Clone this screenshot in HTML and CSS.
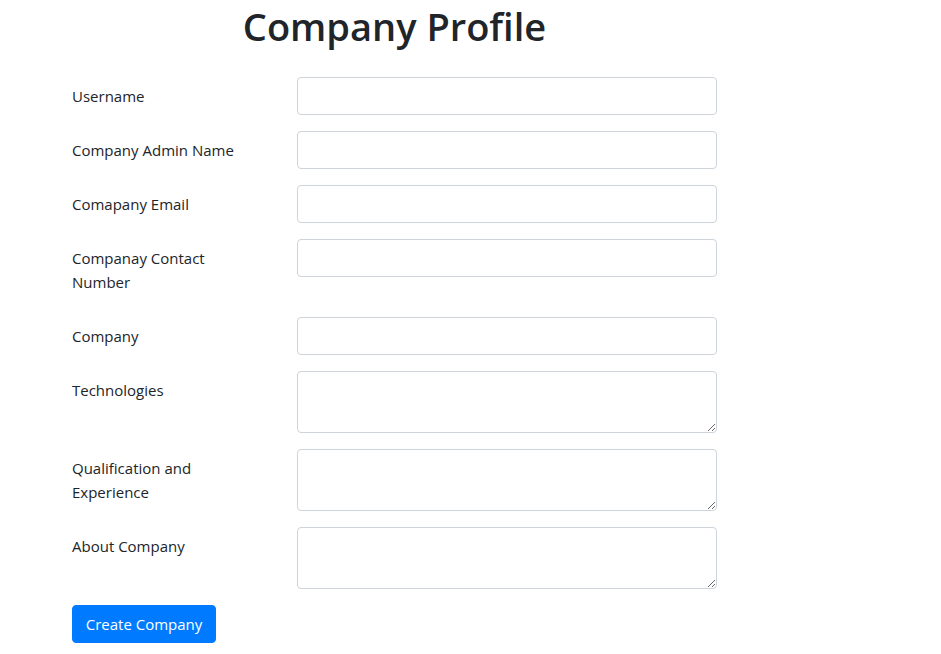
FILE: index.html
```html
<!DOCTYPE html>
<html>
<head>
<meta charset="utf-8">
<link rel="stylesheet" href="styles.css">
</head>
<body>
<div class="wrap">
  <h1 class="title">Company Profile</h1>
  <form class="form">
    <div class="row"><label class="lbl">Username</label><div class="field"><input class="ctl" type="text"></div></div>
    <div class="row"><label class="lbl">Company Admin Name</label><div class="field"><input class="ctl" type="text"></div></div>
    <div class="row"><label class="lbl">Comapany Email</label><div class="field"><input class="ctl" type="text"></div></div>
    <div class="row"><label class="lbl">Companay Contact Number</label><div class="field"><input class="ctl" type="text"></div></div>
    <div class="row"><label class="lbl">Company</label><div class="field"><input class="ctl" type="text"></div></div>
    <div class="row"><label class="lbl">Technologies</label><div class="field"><textarea class="ctl area" rows="2"></textarea></div></div>
    <div class="row"><label class="lbl">Qualification and Experience</label><div class="field"><textarea class="ctl area" rows="2"></textarea></div></div>
    <div class="row"><label class="lbl">About Company</label><div class="field"><textarea class="ctl area" rows="2"></textarea></div></div>
    <div class="btnrow"><button type="button" class="btn">Create Company</button></div>
  </form>
</div>
</body>
</html>
```
FILE: styles.css
```css
html, body {
  margin: 0;
  padding: 0;
  background: #fff;
}
body {
  font-family: "Open Sans", "Noto Sans", sans-serif;
  font-size: 15px;
  line-height: 24px;
  color: #212529;
}
.wrap {
  margin-left: 57px;
  width: 675px;
}
.title {
  margin: 0 0 31px 0;
  padding-top: 6px;
  font-size: 38px;
  line-height: 40px;
  font-weight: 600;
  text-align: center;
  color: #212529;
}
.form {
  display: flex;
  flex-direction: column;
}
.row {
  display: flex;
  margin-bottom: 16px;
}
.lbl {
  width: 180px;
  padding: 7px 30px 7px 15px;
  flex: none;
}
.field {
  flex: 1;
  padding: 0 15px;
}
.ctl {
  display: block;
  box-sizing: border-box;
  width: 420px;
  height: 38px;
  padding: 6px 12px;
  border: 1px solid #ced4da;
  border-radius: 4px;
  background: #fff;
  font: inherit;
  margin: 0;
}
.area {
  height: 62px;
  resize: vertical;
}
.btnrow {
  padding: 0 15px;
}
.btn {
  background: #007bff;
  color: #fff;
  border: 1px solid #007bff;
  border-radius: 4px;
  height: 38px;
  padding: 0 12px;
  font-family: inherit;
  font-size: 15px;
  line-height: 24px;
  width: 144px;
}
```
